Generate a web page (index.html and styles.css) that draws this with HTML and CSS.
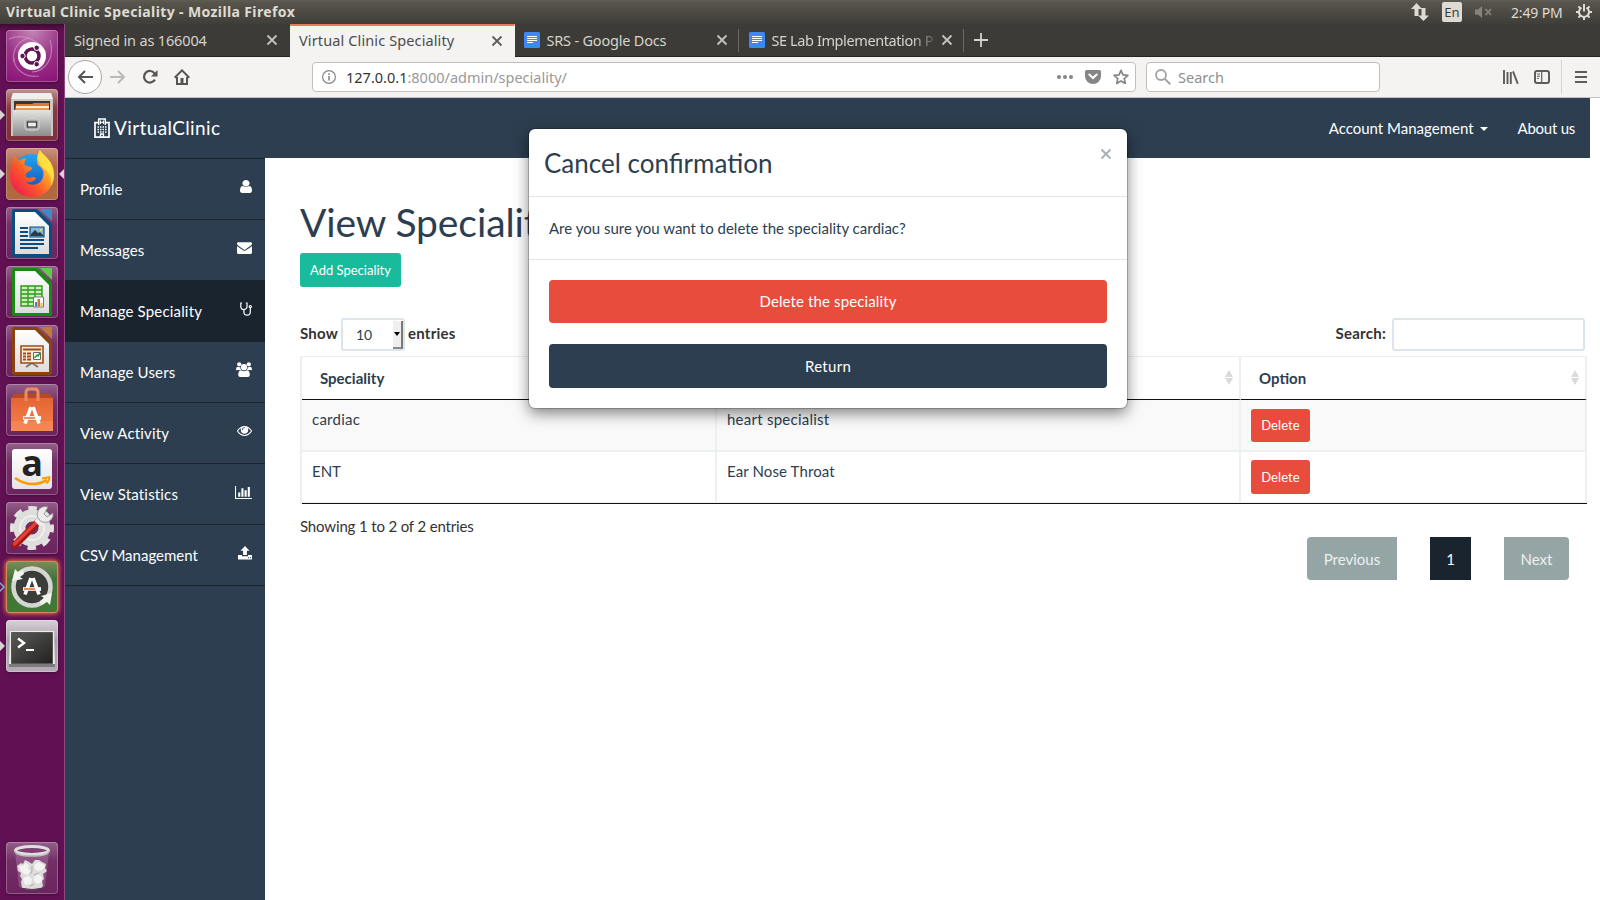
FILE: index.html
```html
<!DOCTYPE html>
<html lang="en">
<head>
<meta charset="utf-8">
<title>Virtual Clinic Speciality</title>
<link rel="stylesheet" href="styles.css">
</head>
<body>
<svg class="defs" width="0" height="0" aria-hidden="true">
  <defs>
    <linearGradient id="steel" x1="0" y1="0" x2="0" y2="1"><stop offset="0" stop-color="#e4e4e2"/><stop offset="1" stop-color="#8c8c8c"/></linearGradient>
    <linearGradient id="fox" x1="1" y1="0" x2="0.1" y2="0.9"><stop offset="0" stop-color="#fff44f"/><stop offset=".35" stop-color="#ffb02a"/><stop offset=".65" stop-color="#ff5a26"/><stop offset="1" stop-color="#ee1c52"/></linearGradient>
    <linearGradient id="globe" x1="0" y1="0" x2="0" y2="1"><stop offset="0" stop-color="#21a7f0"/><stop offset="1" stop-color="#1a3fb4"/></linearGradient>
    <linearGradient id="paper" x1="0" y1="0" x2="0" y2="1"><stop offset="0" stop-color="#fff"/><stop offset="1" stop-color="#dcdcdc"/></linearGradient>
    <linearGradient id="bag" x1="0" y1="0" x2="0" y2="1"><stop offset="0" stop-color="#e0622f"/><stop offset="1" stop-color="#f7814d"/></linearGradient>
    <linearGradient id="screen" x1="0" y1="0" x2="1" y2="1"><stop offset="0" stop-color="#5a5a58"/><stop offset="1" stop-color="#22221f"/></linearGradient>
  </defs>
</svg>

<div class="desktop">
  <header class="panel">
    <span class="panel-title">Virtual Clinic Speciality - Mozilla Firefox</span>
    <div class="indicators">
      <svg class="ind-net" width="18" height="18" viewBox="0 0 18 18"><path d="M5.500 0L11 6H7.500v7h-4V6H0zM12.500 18L7 12.500h3.500V5h4v7.500H18z" fill="#dfdbd2"/></svg>
      <span class="lang">En</span>
      <svg class="ind-vol" width="18" height="12" viewBox="0 0 18 12"><path d="M0 3.500h3L7 0v12L3 8.500H0z" fill="#85837c"/><path d="M10.500 3l5.500 6M16 3l-5.500 6" stroke="#85837c" stroke-width="1.800"/></svg>
      <span class="clock">2:49 PM</span>
      <svg class="ind-gear" width="16" height="16" viewBox="0 0 16 16" fill="none" stroke="#dfdbd2"><path d="M5.500 3.600A5 5 0 1 0 10.500 3.600" stroke-width="2"/><path d="M8 0v7.500" stroke-width="2"/><path d="M3.500 8H0M16 8h-3.500M8 12.500V16M4.700 11.300L2.400 13.600M11.300 11.300l2.300 2.300M4.500 4.500L2.400 2.400M11.500 4.500l2.100-2.100" stroke-width="2"/></svg>
    </div>
  </header>

  <aside class="launcher">
    <div class="tile tile-dash">
      <svg width="52" height="52" viewBox="0 0 52 52"><g fill="none" stroke="#d79acb" stroke-width="1.200" opacity=".65"><path d="M3 9c14-6 34 0 35 19M44 10c5 16-3 31-18 32M8 28c0 12 12 20 25 18M8 32c-3-13 6-23 17-24"/></g><circle cx="26" cy="26" r="14" fill="#fff"/><circle cx="26" cy="26" r="7" fill="none" stroke="#5e1450" stroke-width="3.500"/><g fill="#5e1450" stroke="#fff" stroke-width="1"><circle cx="16.500" cy="26" r="2.700"/><circle cx="30.700" cy="17.800" r="2.700"/><circle cx="30.700" cy="34.200" r="2.700"/></g></svg>
    </div>
    <div class="tile tile-files"><i class="pip"></i>
      <svg width="52" height="52" viewBox="0 0 52 52"><path d="M7 4h38l2 7v36H5V11z" fill="#c9c9c7"/><path d="M7 4h38l2 6H5z" fill="#efefed"/><path d="M8 12h36v10H8z" fill="#3b3430"/><path d="M10 15h16l2-1h15v7H9z" fill="#e8772e"/><path d="M10 17h33v2H10z" fill="#fff0dc"/><path d="M10 19h33v3H10z" fill="#e79a4e"/><path d="M7 21h38v26H7z" fill="url(#steel)"/><rect x="19" y="30" width="14" height="11" rx="2.500" fill="#a9a9a9" stroke="#d9d9d9"/><rect x="21.500" y="33" width="9" height="5" fill="#eee" stroke="#444" stroke-width="1.300"/></svg>
    </div>
    <div class="tile tile-firefox"><i class="pip"></i><i class="pip pip-right"></i>
      <svg width="52" height="52" viewBox="0 0 52 52"><circle cx="26" cy="27" r="21" fill="url(#globe)"/><path d="M34 2c2 5 14 10 14 25 0 13-10 22-22 22S4 40 4 28c0-7 2-13 5-20l3 5c3-2 6-3 8-2-2 3-2 5-1 6 2 2 6 1 7 3 0 3-5 3-6 6-1 5 4 4 7 3l3 1c-1 3-5 5-10 4 5 5 15 3 17-5 2-7-2-10-5-12-2-6-1-11 2-15z" fill="url(#fox)"/><path d="M34 2c2 5 14 10 14 25 0 5-2 9-3 11 1-7-1-14-7-17-6-4-7-13-4-19z" fill="#ffe445" opacity=".85"/></svg>
    </div>
    <div class="tile tile-doc">
      <svg width="52" height="52" viewBox="0 0 52 52"><path d="M6 4q0-2 2-2h23l15 15v31q0 2-2 2H8q-2 0-2-2z" fill="#0b4d80"/><path d="M34 2h12v12z" fill="#3d8cc4"/><path d="M9 5h20l14 14v28H9z" fill="url(#paper)"/><path d="M14 21h8M14 25h8M14 29h8M14 33h24M14 37h24M14 41h18" stroke="#0b4d80" stroke-width="1.900"/><path d="M24 20h14v10H24z" fill="#7db8df" stroke="#0b4d80" stroke-width="1.200"/><path d="M25 29v-2l4-4 3 3 2-1 3 3v1z" fill="#273c49"/><circle cx="35" cy="23" r="1.300" fill="#ffcf3f"/></svg>
    </div>
    <div class="tile tile-doc">
      <svg width="52" height="52" viewBox="0 0 52 52"><path d="M6 4q0-2 2-2h23l15 15v31q0 2-2 2H8q-2 0-2-2z" fill="#178a12"/><path d="M34 2h12v12z" fill="#5ecb4c"/><path d="M9 5h20l14 14v28H9z" fill="url(#paper)"/><path d="M15 20h21v20H15z" fill="#cdf0b8" stroke="#2b9a1e" stroke-width="1.400"/><path d="M15 24h21M15 28h21M15 32h21M15 36h21M22 20v20M29 20v20" stroke="#2b9a1e" stroke-width="1.300"/><path d="M27.500 31h10v10h-10z" fill="#fff" stroke="#777"/><path d="M29 36h2v4.500h-2z" fill="#3584c6"/><path d="M31.500 33h2.500v7.500h-2.500z" fill="#e36b22"/><path d="M34.500 37h2v3.500h-2z" fill="#f6bd2f"/></svg>
    </div>
    <div class="tile tile-doc">
      <svg width="52" height="52" viewBox="0 0 52 52"><path d="M6 4q0-2 2-2h23l15 15v31q0 2-2 2H8q-2 0-2-2z" fill="#8a420f"/><path d="M34 2h12v12z" fill="#c07a3a"/><path d="M9 5h20l14 14v28H9z" fill="url(#paper)"/><path d="M26 38l-6 4M26 38l6 4" stroke="#777" stroke-width="2"/><path d="M15 21h22v17H15z" fill="#f9ece0" stroke="#a24a12" stroke-width="1.600"/><path d="M17 24.500h18" stroke="#a24a12" stroke-width="2"/><path d="M17 28.500h3M17 31.500h3M17 34.500h3M21 28.500h4M21 31.500h4M21 34.500h4" stroke="#a24a12" stroke-width="1.800"/><path d="M27.500 27.500h7v7h-7z" fill="#fff" stroke="#666"/><path d="M28.500 33l2.500-3 1 1 2-3" stroke="#239b35" stroke-width="1.500" fill="none"/></svg>
    </div>
    <div class="tile tile-doc">
      <svg width="52" height="52" viewBox="0 0 52 52"><path d="M5 14l4-4h34l4 4v33H5z" fill="url(#bag)"/><path d="M5 14h42l-4-4H9z" fill="#b94a20"/><path d="M20 17V9q0-4 3-4h6q3 0 3 4v8" fill="none" stroke="#f08a60" stroke-width="3"/><path d="M5 37h42v10H5z" fill="#fa8d5c" opacity=".5"/><path d="M19 39.500L25 23M33 39.500L27 23" stroke="#fff" stroke-width="3.600"/><path d="M17 34h18" stroke="#fff" stroke-width="3.600"/><path d="M18 34h11" stroke="#ef6c2c" stroke-width="1.500"/></svg>
    </div>
    <div class="tile tile-doc">
      <div class="amazon"><span>a</span><svg width="40" height="40" viewBox="0 0 40 40"><path d="M3 29q16 11 32 2" fill="none" stroke="#f90" stroke-width="2.600"/><path d="M30 29.500l7.500-1.500q0 4-3 6.500" fill="none" stroke="#f90" stroke-width="1.800"/></svg></div>
    </div>
    <div class="tile tile-doc">
      <svg width="52" height="52" viewBox="0 0 52 52"><circle cx="26" cy="26" r="19.500" fill="none" stroke="#e2e2e0" stroke-width="5" stroke-dasharray="8.500 6.815" stroke-dashoffset="4.250"/><circle cx="26" cy="26" r="12.500" fill="none" stroke="#dededc" stroke-width="12"/><circle cx="26" cy="26" r="12" fill="none" stroke="#f4f4f4" stroke-width="1.500"/><path d="M35 17L9 43" stroke="#a31717" stroke-width="7" stroke-linecap="round"/><path d="M32 19L8.500 42" stroke="#e13f38" stroke-width="3.500" stroke-linecap="round"/><path d="M30 17l6 6" stroke="#eee" stroke-width="5"/><path d="M42 5a8 8 0 1 0 5 6l-6 4-3-3z" fill="#ececea" stroke="#8d8d8d" stroke-width=".8"/></svg>
    </div>
    <div class="tile tile-update"><i class="pip pip-hollow"></i>
      <svg width="52" height="52" viewBox="0 0 52 52"><circle cx="26" cy="26" r="18.500" fill="#3a3d38" stroke="#d4d6d2" stroke-width="4.500"/><path d="M6 20l3-12 3 3 5-2 1 4-4 3 3 2zM46 32l-2 12-3-3-6 3-1-4 4-3-3-2z" fill="#f2f2ef"/><path d="M19 33.500L25 17M33 33.500L27 17" stroke="#fff" stroke-width="3.600"/><path d="M17 28h18" stroke="#fff" stroke-width="3.600"/><path d="M18 28h11" stroke="#ef6c2c" stroke-width="1.600"/></svg>
    </div>
    <div class="tile tile-term"><i class="pip"></i>
      <svg width="52" height="52" viewBox="0 0 52 52"><path d="M4 11h44l1 36H3z" fill="#eeeeec"/><path d="M3 44h46v3H3z" fill="#7d7b7d"/><path d="M5.500 12.500h41v31h-41z" fill="url(#screen)" stroke="#555"/><path d="M12 18.500l6 4.500-6 4.500" fill="none" stroke="#fff" stroke-width="2.400"/><path d="M20 30h8" stroke="#fff" stroke-width="2"/></svg>
    </div>
    <div class="tile tile-doc tile-trash">
      <svg width="52" height="52" viewBox="0 0 52 52"><path d="M9 10l4 34q0 3 13 3t13-3l4-34z" fill="#c9a3c5" opacity=".3"/><path d="M11 24l4-3 2 1 2-4 4 2 3 2 3-4 4 0 3 2 4 2-1 4 2 3-4 3 1 5-2 2 1 5-2 2q-10 3-19 0l-1-6 1-3-2-3 1-3-3-2z" fill="#dcdcda"/><path d="M13 24l4 0 2-3 4 2-1 4 3 2-3 4-4-1-3-3zM29 22l3-2 4 2 3 2-3 4-5 1-3-3zM17 36l5-2 4 3-1 5-6 1zM28 35l4-3 4 3 0 5-5 2-3-3z" fill="#f3f3f1"/><path d="M26 24v5l-2 3M33 31l-5 2M24 44l4-2" fill="none" stroke="#b4b5b1" stroke-width="1.200"/><path d="M13 46q13 3 26 0" fill="none" stroke="#4e3c4c"/><ellipse cx="26" cy="8.500" rx="16.500" ry="4" fill="#7d3f72" stroke="#dededb" stroke-width="3"/><path d="M9 9q0 5 17 5t17-5" fill="none" stroke="#b9b9b6" stroke-width="1.500"/></svg>
    </div>
  </aside>

  <section class="browser">
    <div class="tabs">
      <div class="tab tab-first"><span class="tab-text t1">Signed in as 166004</span><svg class="x" width="12" height="12" viewBox="0 0 12 12"><path d="M1.500 1.500l9 9M10.500 1.500l-9 9"/></svg></div>
      <div class="tab active"><span class="tab-text t2">Virtual Clinic Speciality</span><svg class="x" width="12" height="12" viewBox="0 0 12 12"><path d="M1.500 1.500l9 9M10.500 1.500l-9 9"/></svg></div>
      <div class="tab tab-doc"><svg class="docs" width="16" height="16" viewBox="0 0 16 16"><rect width="16" height="16" rx="1.500" fill="#4285f4"/><path d="M3 4.500h10M3 6.500h10M3 8.500h10M3 10.500h6" stroke="#fff" stroke-width="1.100"/></svg><span class="tab-text t3">SRS - Google Docs</span><svg class="x" width="12" height="12" viewBox="0 0 12 12"><path d="M1.500 1.500l9 9M10.500 1.500l-9 9"/></svg></div>
      <div class="tab tab-doc"><svg class="docs" width="16" height="16" viewBox="0 0 16 16"><rect width="16" height="16" rx="1.500" fill="#4285f4"/><path d="M3 4.500h10M3 6.500h10M3 8.500h10M3 10.500h6" stroke="#fff" stroke-width="1.100"/></svg><span class="tab-text t4">SE Lab Implementation P</span><svg class="x" width="12" height="12" viewBox="0 0 12 12"><path d="M1.500 1.500l9 9M10.500 1.500l-9 9"/></svg></div>
      <svg class="plus" width="14" height="14" viewBox="0 0 14 14"><path d="M7 0v14M0 7h14" stroke="#d6d3cb" stroke-width="1.800"/></svg>
    </div>

    <div class="toolbar">
      <span class="back"><svg width="16" height="14" viewBox="0 0 16 14"><path d="M8 1L2 7l6 6M2 7h14" fill="none" stroke="#555" stroke-width="2"/></svg></span>
      <svg class="fwd" width="16" height="14" viewBox="0 0 16 14"><path d="M8 1l6 6-6 6M14 7H0" fill="none" stroke="#bab9b8" stroke-width="2"/></svg>
      <svg class="reload" width="16" height="16" viewBox="0 0 16 16"><path d="M12.900 10.600A5.800 5.800 0 1 1 12.500 4.300" fill="none" stroke="#555" stroke-width="2.200"/><path d="M15.500 1v6.500H9z" fill="#555"/></svg>
      <svg class="home" width="16" height="16" viewBox="0 0 16 16"><path d="M.7 8.700L8 1.400l7.300 7.300" fill="none" stroke="#555" stroke-width="2"/><path d="M3 8v7h10V8" fill="none" stroke="#555" stroke-width="2"/><path d="M6.500 9h3v6h-3z" fill="#555"/></svg>
      <div class="field url">
        <svg class="info" width="14" height="14" viewBox="0 0 14 14"><circle cx="7" cy="7" r="6.400" fill="none" stroke="#858585" stroke-width="1.200"/><path d="M7 6v4.500M7 3.200v1.700" stroke="#858585" stroke-width="1.600"/></svg>
        <span class="url-text"><b>127.0.0.1</b>:8000/admin/speciality/</span>
        <svg class="dots" width="16" height="4" viewBox="0 0 16 4" fill="#858585"><circle cx="2" cy="2" r="2"/><circle cx="8" cy="2" r="2"/><circle cx="14" cy="2" r="2"/></svg>
        <svg class="pocket" width="16" height="14" viewBox="0 0 16 14"><path d="M1.500 0h13Q16 0 16 1.500V6a8 8 0 0 1-16 0V1.500Q0 0 1.500 0z" fill="#858585"/><path d="M4.300 4.500L8 8l3.700-3.500" fill="none" stroke="#fff" stroke-width="2" stroke-linecap="round"/></svg>
        <svg class="star" width="16" height="16" viewBox="0 0 16 16"><path d="M8 1.300l2 4.500 4.900.5-3.700 3.300 1.100 4.900L8 12l-4.300 2.500 1.100-4.900L1.100 6.300 6 5.800z" fill="none" stroke="#858585" stroke-width="1.700" stroke-linejoin="round"/></svg>
      </div>
      <div class="field find">
        <svg width="16" height="16" viewBox="0 0 16 16"><circle cx="6" cy="6" r="5" fill="none" stroke="#a3a3a3" stroke-width="1.800"/><path d="M9.700 9.700l5.600 5.600" stroke="#a3a3a3" stroke-width="2"/></svg>
        <span class="find-text">Search</span>
      </div>
      <svg class="library" width="16" height="14" viewBox="0 0 16 14"><path d="M1 0v14M4.500 2v12M7.800 2v12M10 1.300l4.800 12.500" stroke="#5c5c5a" stroke-width="1.900"/></svg>
      <svg class="sidebars" width="16" height="14" viewBox="0 0 16 14"><rect x="1" y="1" width="14" height="12" rx="2" fill="none" stroke="#5c5c5a" stroke-width="2"/><path d="M7.700 1v12" stroke="#5c5c5a" stroke-width="1.200"/><path d="M3 4h3M3 6.200h3M3 8.400h2" stroke="#5c5c5a"/></svg>
      <svg class="burger" width="12" height="12" viewBox="0 0 12 12"><path d="M0 1h12M0 6h12M0 11h12" stroke="#5c5c5a" stroke-width="1.900"/></svg>
    </div>

    <div class="page">
      <nav class="navbar">
        <svg class="hospital" width="16" height="20" viewBox="0 0 16 20" fill="none" stroke="#fff"><path d="M4.500 4.700H1v14.500h14V4.700h-3.500" stroke-width="1.700"/><path d="M4.700 7V1h6.600v6" stroke-width="1.400"/><path d="M6.500 2.500v3.500M9.500 2.500v3.500M6.500 4.200h3" stroke-width="1.100"/><path d="M3.500 9h9M3.500 11.500h9M3.500 14h9" stroke-width="1.400" stroke-dasharray="1.500 1"/><path d="M6.500 19v-3h3v3" stroke-width="1.300"/></svg>
        <span class="brand">VirtualClinic</span>
        <a class="nav-acc">Account Management</a><i class="caret"></i>
        <a class="nav-about">About us</a>
      </nav>
      <div class="body">
        <ul class="sidebar">
          <li><span>Profile</span><svg class="up" width="12" height="13" viewBox="256 128 1280 1536" preserveAspectRatio="none"><path d="M1536 1399q0 109-62.500 187t-150.500 78h-854q-88 0-150.500-78t-62.500-187q0-85 8.500-160.500t31.500-152 58.500-131 94-89 134.500-34.500q131 128 313 128t313-128q76 0 134.500 34.500t94 89 58.500 131 31.500 152 8.500 160.500zm-256-887q0 159-112.500 271.500t-271.500 112.500-271.500-112.500-112.500-271.500 112.500-271.500 271.500-112.500 271.500 112.500 112.500 271.500z"/></svg></li>
          <li><span>Messages</span><svg width="15" height="12" viewBox="0 234 1792 1430" preserveAspectRatio="none"><path d="M1792 710v794q0 66-47 113t-113 47h-1472q-66 0-113-47t-47-113v-794q44 49 101 87 362 246 497 345 57 42 92.500 65.500t94.500 48 110 24.500h2q51 0 110-24.500t94.500-48 92.500-65.500q170-123 498-345 57-39 100-87zm0-294q0 79-49 151t-122 123q-376 261-468 325-10 7-42.500 31t-54 38.500-52 32.500-57.500 27-50 9h-2q-23 0-50-9t-57.500-27-52-32.500-54-38.500-42.500-31q-91-64-262-182.500t-205-142.500q-62-42-117-115.500t-55-136.500q0-78 41.500-130t118.500-52h1472q65 0 112.500 47t47.500 113z"/></svg></li>
          <li class="on wide"><span>Manage Speciality</span><svg width="12" height="14" viewBox="0 0 12 14"><g fill="none" stroke="#fff" stroke-width="1.200"><path d="M2 1H.8v3.500a3.100 3.100 0 0 0 6.200 0V1H5.800"/><path d="M3.900 7.500V10a3.200 3.200 0 0 0 6.400 0V6"/><circle cx="10.300" cy="4.600" r="1.100"/></g></svg></li>
          <li class="wide"><span>Manage Users</span><svg class="up" width="16" height="15" viewBox="0 0 16 15"><circle cx="3.200" cy="2.300" r="2.100"/><circle cx="12.800" cy="2.300" r="2.100"/><circle cx="8" cy="5.200" r="3.100"/><path d="M0 7.600Q0 4.800 1.600 4.800q1.500.8 2.600.3Q4.300 7 5.100 8H1.600Q0 8.600 0 7.600zM16 7.600q0-2.800-1.600-2.800-1.500.8-2.600.3-.1 1.900-.9 2.900h3.500q1.600.6 1.600-.4zM2.200 13Q2.200 8.300 5.100 8.200q2.900 2 5.800 0 2.900.1 2.900 4.800 0 2-2 2H4.200q-2 0-2-2z"/></svg></li>
          <li class="wide"><span>View Activity</span><svg width="15" height="10" viewBox="0 384 1792 1152" preserveAspectRatio="none"><path d="M1664 960q-152-236-381-353 61 104 61 225 0 185-131.500 316.500t-316.500 131.500-316.500-131.500-131.500-316.500q0-121 61-225-229 117-381 353 133 205 333.500 326.500t434.500 121.500 434.500-121.500 333.500-326.500zm-720-384q0-20-14-34t-34-14q-125 0-214.500 89.500t-89.500 214.500q0 20 14 34t34 14 34-14 14-34q0-86 61-147t147-61q20 0 34-14t14-34zm848 384q0 34-20 69-140 230-376.500 368.500t-499.500 138.500-499.500-139-376.500-368q-20-35-20-69t20-69q140-229 376.500-368t499.500-139 499.500 139 376.500 368q20 35 20 69z"/></svg></li>
          <li class="wide"><span>View Statistics</span><svg width="17" height="13" viewBox="0 128 2048 1536" preserveAspectRatio="none"><path d="M640 896v512h-256v-512h256zm384-512v1024h-256v-1024h256zm1024 1152v128h-2048v-1536h128v1408h1920zm-640-896v768h-256v-768h256zm384-384v1152h-256v-1152h256z"/></svg></li>
          <li><span>CSV Management</span><svg width="14" height="14" viewBox="0 0 14 14"><path d="M7 0l4.500 4.800H8.900V9H5.100V4.800H2.500z"/><path fill-rule="evenodd" d="M0 9h4v1.200h6V9h4v4.500H0zM10 11.300v1h1v-1zm2 0v1h1v-1z"/></svg></li>
        </ul>
        <main class="content">
          <h1>View Speciality</h1>
          <a class="btn-add">Add Speciality</a>
          <div class="controls">
            <span class="lbl show">Show</span>
            <span class="select"><em>10</em><i class="drop"></i></span>
            <span class="lbl">entries</span>
            <span class="lbl search-lbl">Search:</span>
            <span class="search-box"></span>
          </div>
          <div class="table">
            <div class="row head"><div class="c1">Speciality</div><div class="c2"><i class="sort"></i></div><div class="c3">Option<i class="sort"></i></div></div>
            <div class="row odd"><div class="c1">cardiac</div><div class="c2">heart specialist</div><div class="c3"><a class="btn-del">Delete</a></div></div>
            <div class="row last"><div class="c1">ENT</div><div class="c2">Ear Nose Throat</div><div class="c3"><a class="btn-del tall">Delete</a></div></div>
          </div>
          <div class="foot">
            <span class="showing">Showing 1 to 2 of 2 entries</span>
            <div class="pager"><a class="prev">Previous</a><a class="cur">1</a><a class="next">Next</a></div>
          </div>
        </main>
      </div>
    </div>
  </section>

  <div class="modal">
    <div class="modal-head"><h3>Cancel confirmation</h3><svg class="close" width="12" height="12" viewBox="0 0 12 12"><path d="M1.500 1.500l9 9M10.500 1.500l-9 9" stroke="#abb2b9" stroke-width="2.100"/></svg></div>
    <div class="modal-body">Are you sure you want to delete the speciality cardiac?</div>
    <div class="modal-foot"><a class="danger">Delete the speciality</a><a class="primary">Return</a></div>
  </div>
</div>
</body>
</html>
```

FILE: styles.css
```css
* { box-sizing: border-box; }
html, body { margin: 0; height: 900px; overflow: hidden; }
body { font-family: Lato, "Liberation Sans", sans-serif; font-size: 15px; line-height: 21px; color: #2c3e50; background: #fff; }
.defs { position: absolute; }
svg { display: block; flex: none; }
.desktop { position: relative; width: 1600px; height: 900px; display: grid; grid-template: 24px 876px / 65px 1535px; }

/* top panel */
.panel { grid-column: 1 / 3; display: flex; align-items: center; justify-content: space-between; padding: 0 8px 2px 6px; background: linear-gradient(#5f5d53, #56534a 15%, #3f3e39); color: #dfdbd2; font-family: "Noto Sans", sans-serif; font-size: 14px; white-space: nowrap; }
.panel-title { font-weight: 700; letter-spacing: .38px; }
.indicators { display: flex; align-items: center; padding-top: 2px; }
.lang { width: 20px; height: 20px; margin: 0 13px; border-radius: 2px; background: #dfdbd2; color: #3c3b37; text-align: center; line-height: 20px; font-size: 13px; }
.clock { width: 53px; margin: 0 12px 0 18px; letter-spacing: -.15px; }

/* launcher */
.launcher { display: flex; flex-direction: column; gap: 7px; padding: 6px 0 6px 6px; background: linear-gradient(#3f0a33, #611153 7px, #611153); border-right: 1px solid #8b4a80; }
.tile { position: relative; width: 52px; height: 52px; flex: none; border-radius: 4px; box-shadow: inset 0 0 0 1px rgba(255,255,255,.25), 0 1px 3px rgba(0,0,0,.3); }
.tile-dash { background: radial-gradient(circle at 50% 0, #c487b8, #9a3587 50%, #8b1277); }
.tile-files { background: linear-gradient(#c09590, #8b3a40 35%, #7e2f38); }
.tile-firefox { background: linear-gradient(#c9937c, #b3664b 35%, #b06a3d); }
.tile-doc { background: linear-gradient(#93608a, #743067 35%, #6c2460); }
.tile-update { background: linear-gradient(#78905c, #43713a 35%, #3f7a35); box-shadow: inset 0 0 0 1px #d98a5a, 0 0 4px 1px #ef7443; }
.tile-term { background: linear-gradient(#d8d0d8, #aaa0aa 40%, #b5abb4); }
.tile-trash { margin-top: auto; }
.pip { position: absolute; left: -6px; top: 21px; border: 5px solid transparent; border-left-color: #d8d4d6; border-right: 0; }
.pip-right { left: 53px; border-right: 5px solid #d8d4d6; border-left: 0; }
.pip-hollow { border-left-color: #7fb2dd; }
.pip-hollow::after { content: ""; position: absolute; left: -5px; top: -3px; border: 3px solid transparent; border-left-color: #611153; border-right: 0; }
.amazon { position: relative; top: 6px; margin: 0 6px; width: 40px; height: 40px; border-radius: 3px; background: linear-gradient(#fff, #e6e4e6); }
.amazon span { position: absolute; left: 0; width: 40px; top: -1px; text-align: center; font: 700 36px/30px "Open Sans", sans-serif; color: #222; }
.amazon svg { position: absolute; left: 0; top: 0; }

/* browser chrome */
.browser { display: grid; grid-template-rows: 33px 41px 802px; min-width: 0; }
.tabs, .toolbar { font-family: "Noto Sans", sans-serif; font-size: 14.500px; white-space: nowrap; }
.tabs { display: flex; background: #3c3b37; border-bottom: 1px solid #262523; color: #d6d3cb; }
.tab { display: flex; align-items: center; justify-content: space-between; width: 225px; padding: 0 11px 0 9px; border-right: 1px solid transparent; }
.tab .x { stroke: #c6c3bb; stroke-width: 1.800; fill: none; }
.tab.active { height: 33px; background: #f4f3f2; color: #4c4c4c; border-top: 2px solid #ee7b4f; padding-bottom: 2px; }
.active .x { stroke: #5c5c5a; }
.tab-doc { background: linear-gradient(#6a6964, #6a6964) right 5px / 1px 23px no-repeat; padding-right: 11px; }
.tab-doc .tab-text { width: 169px; margin-left: 6px; }
.t1 { letter-spacing: -.15px; }
.t2 { letter-spacing: .12px; }
.t3 { letter-spacing: -.2px; }
.t4 { letter-spacing: -.4px; -webkit-mask-image: linear-gradient(90deg, #000 140px, transparent 167px); mask-image: linear-gradient(90deg, #000 140px, transparent 167px); }
.plus { margin: 9px 0 0 9px; }

.toolbar { display: flex; align-items: center; padding: 0 13px 0 3px; border-bottom: 1px solid #c3c2c0; background: linear-gradient(#d6d4d2, #d6d4d2) 1496px 3px / 1px 34px no-repeat #f4f3f2; }
.back { width: 34px; height: 34px; border: 1px solid #a8a7a5; border-radius: 50%; background: #fdfdfd; display: flex; align-items: center; justify-content: center; }
.fwd { margin-left: 8px; }
.reload { margin-left: 16px; }
.home { margin-left: 16px; }
.field { display: flex; align-items: center; height: 30px; background: #fff; border: 1px solid #c1bfbc; border-radius: 4px; }
.url { width: 824px; margin-left: 122px; padding: 0 6px 0 9px; color: #999; }
.url b { font-weight: 400; color: #333; }
.url-text { margin-left: 10px; flex: 1; }
.pocket { margin: 0 12px; }
.find { width: 234px; margin-left: 10px; padding-left: 8px; color: #8f8f8f; }
.find-text { margin-left: 7px; }
.library { margin-left: 123px; }
.sidebars { margin-left: 15px; }
.burger { margin-left: 25px; }

/* page */
.page { background: #fff; }
.navbar { display: flex; align-items: center; width: 1525px; height: 60px; padding: 0 15px 0 29px; background: #2c3e50; color: #fff; }
.brand { margin-left: 4px; margin-top: -1px; font-size: 19px; letter-spacing: .38px; flex: 1; }
.nav-about { letter-spacing: -.25px; }
.caret { margin: 2px 30px 0 6px; border: 4px solid transparent; border-top-color: #fff; border-bottom: 0; }
.body { display: flex; height: 742px; }
.sidebar { margin: 0; padding: 0; list-style: none; width: 200px; background: #2c3e50; color: #fff; border-top: 1px solid #1a242f; }
.sidebar li { display: flex; justify-content: space-between; align-items: center; height: 61px; padding: 0 13px 0 15px; border-bottom: 1px solid #1a242f; }
.sidebar li svg { fill: #fff; margin-bottom: 4px; }
.sidebar li .up { margin-bottom: 6px; }
.sidebar .wide span { letter-spacing: .17px; }
.sidebar .on { background: #1a242f; }

.content { flex: 1; padding: 43px 13px 0 35px; }
h1, h3 { margin: 0; font-weight: 400; color: #2c3e50; }
h1 { font-size: 39px; line-height: 43px; height: 52px; letter-spacing: -.1px; }
.btn-add { display: block; width: 101px; height: 34px; border-radius: 3px; background: #18bc9c; color: #fff; font-size: 13px; line-height: 35px; text-align: center; }
.controls { display: flex; margin-top: 31px; height: 33px; }
.lbl { font-weight: 700; color: #333; line-height: 31px; letter-spacing: .25px; }
.show { width: 41px; }
.select { display: flex; justify-content: space-between; width: 64px; height: 33px; margin-right: 3px; padding-left: 13px; border: 2px solid #dce4ec; border-radius: 3px; line-height: 29px; }
.select em { font-style: normal; font-size: 14px; }
.drop { display: flex; align-items: center; justify-content: flex-end; width: 10px; margin: 1px 0 0; background: #f0efee; border-right: 2px solid #7a7977; border-bottom: 2px solid #8a8987; }
.drop::before { content: ""; margin-right: 1px; border: 3px solid transparent; border-top: 4px solid #000; border-bottom: 0; }
.search-lbl { margin-left: auto; }
.search-box { width: 193px; height: 33px; margin: 0 2px 0 6px; border: 2px solid #dce4ec; border-radius: 3px; }
.table { margin-top: 5px; border-left: 2px solid #ecf0f1; border-top: 1px solid #ecf0f1; }
.row { display: grid; grid-template-columns: 415px 524px 346px; height: 52px; }
.row > div { padding: 9px 10px 0; border-right: 2px solid #ecf0f1; border-bottom: 2px solid #ecf0f1; }
.head { height: 43px; font-weight: 700; }
.head > div { padding: 11px 6px 0 18px; border-bottom: 1px solid #111; display: flex; justify-content: space-between; }
.odd { background: #f9f9f9; }
.odd .c1, .odd .c2 { letter-spacing: .25px; }
.last .c2 { letter-spacing: .12px; }
.last { border-bottom: 1px solid #111; }
.last > div { border-bottom-width: 1px; }
.sort { margin: 2px 0 0 auto; width: 8px; height: 16px; display: flex; flex-direction: column; gap: 1px; }
.sort::before, .sort::after { content: ""; border: 4px solid transparent; }
.sort::before { border-top: 0; border-bottom: 7px solid #dadada; }
.sort::after { border-bottom: 0; border-top: 7px solid #dadada; }
.btn-del { display: block; width: 59px; height: 33px; border-radius: 3px; background: #e74c3c; color: #fff; font-size: 13px; letter-spacing: .1px; line-height: 33px; text-align: center; }
.row .tall { height: 34px; margin-top: -1px; line-height: 35px; }
.foot { display: flex; justify-content: space-between; }
.showing { margin-top: 12px; color: #333; letter-spacing: -.15px; }
.pager { display: flex; gap: 33px; margin: 33px 18px 0 0; color: #fff; line-height: 44px; text-align: center; }
.pager a { height: 43px; background: #95a5a6; }
.prev { width: 90px; border-radius: 4px 0 0 4px; }
.next { width: 65px; border-radius: 0 4px 4px 0; }
.prev, .next { color: #ecf0f1; }
.pager .cur { width: 41px; background: #1a242f; }

/* dialog over the page */
.modal { position: absolute; left: 529px; top: 129px; width: 598px; height: 279px; background: #fff; border-radius: 6px; box-shadow: 0 0 0 1px rgba(0,0,0,.2), 0 5px 15px rgba(0,0,0,.5); }
.modal-head { display: flex; justify-content: space-between; height: 68px; padding: 20px 15px 0; border-bottom: 1px solid #e5e5e5; }
.modal-head h3 { font-size: 26px; line-height: 29px; }
.close { fill: none; margin-top: -1px; }
.modal-body { height: 63px; padding: 21px 20px 0; border-bottom: 1px solid #e5e5e5; }
.modal-foot { display: flex; flex-direction: column; gap: 21px; padding: 20px; }
.modal-foot a { height: 43px; border-radius: 4px; color: #fff; text-align: center; line-height: 43px; letter-spacing: .12px; }
.danger { background: #e74c3c; }
.modal-foot .primary { height: 44px; line-height: 45px; letter-spacing: .3px; background: #2c3e50; }
```
